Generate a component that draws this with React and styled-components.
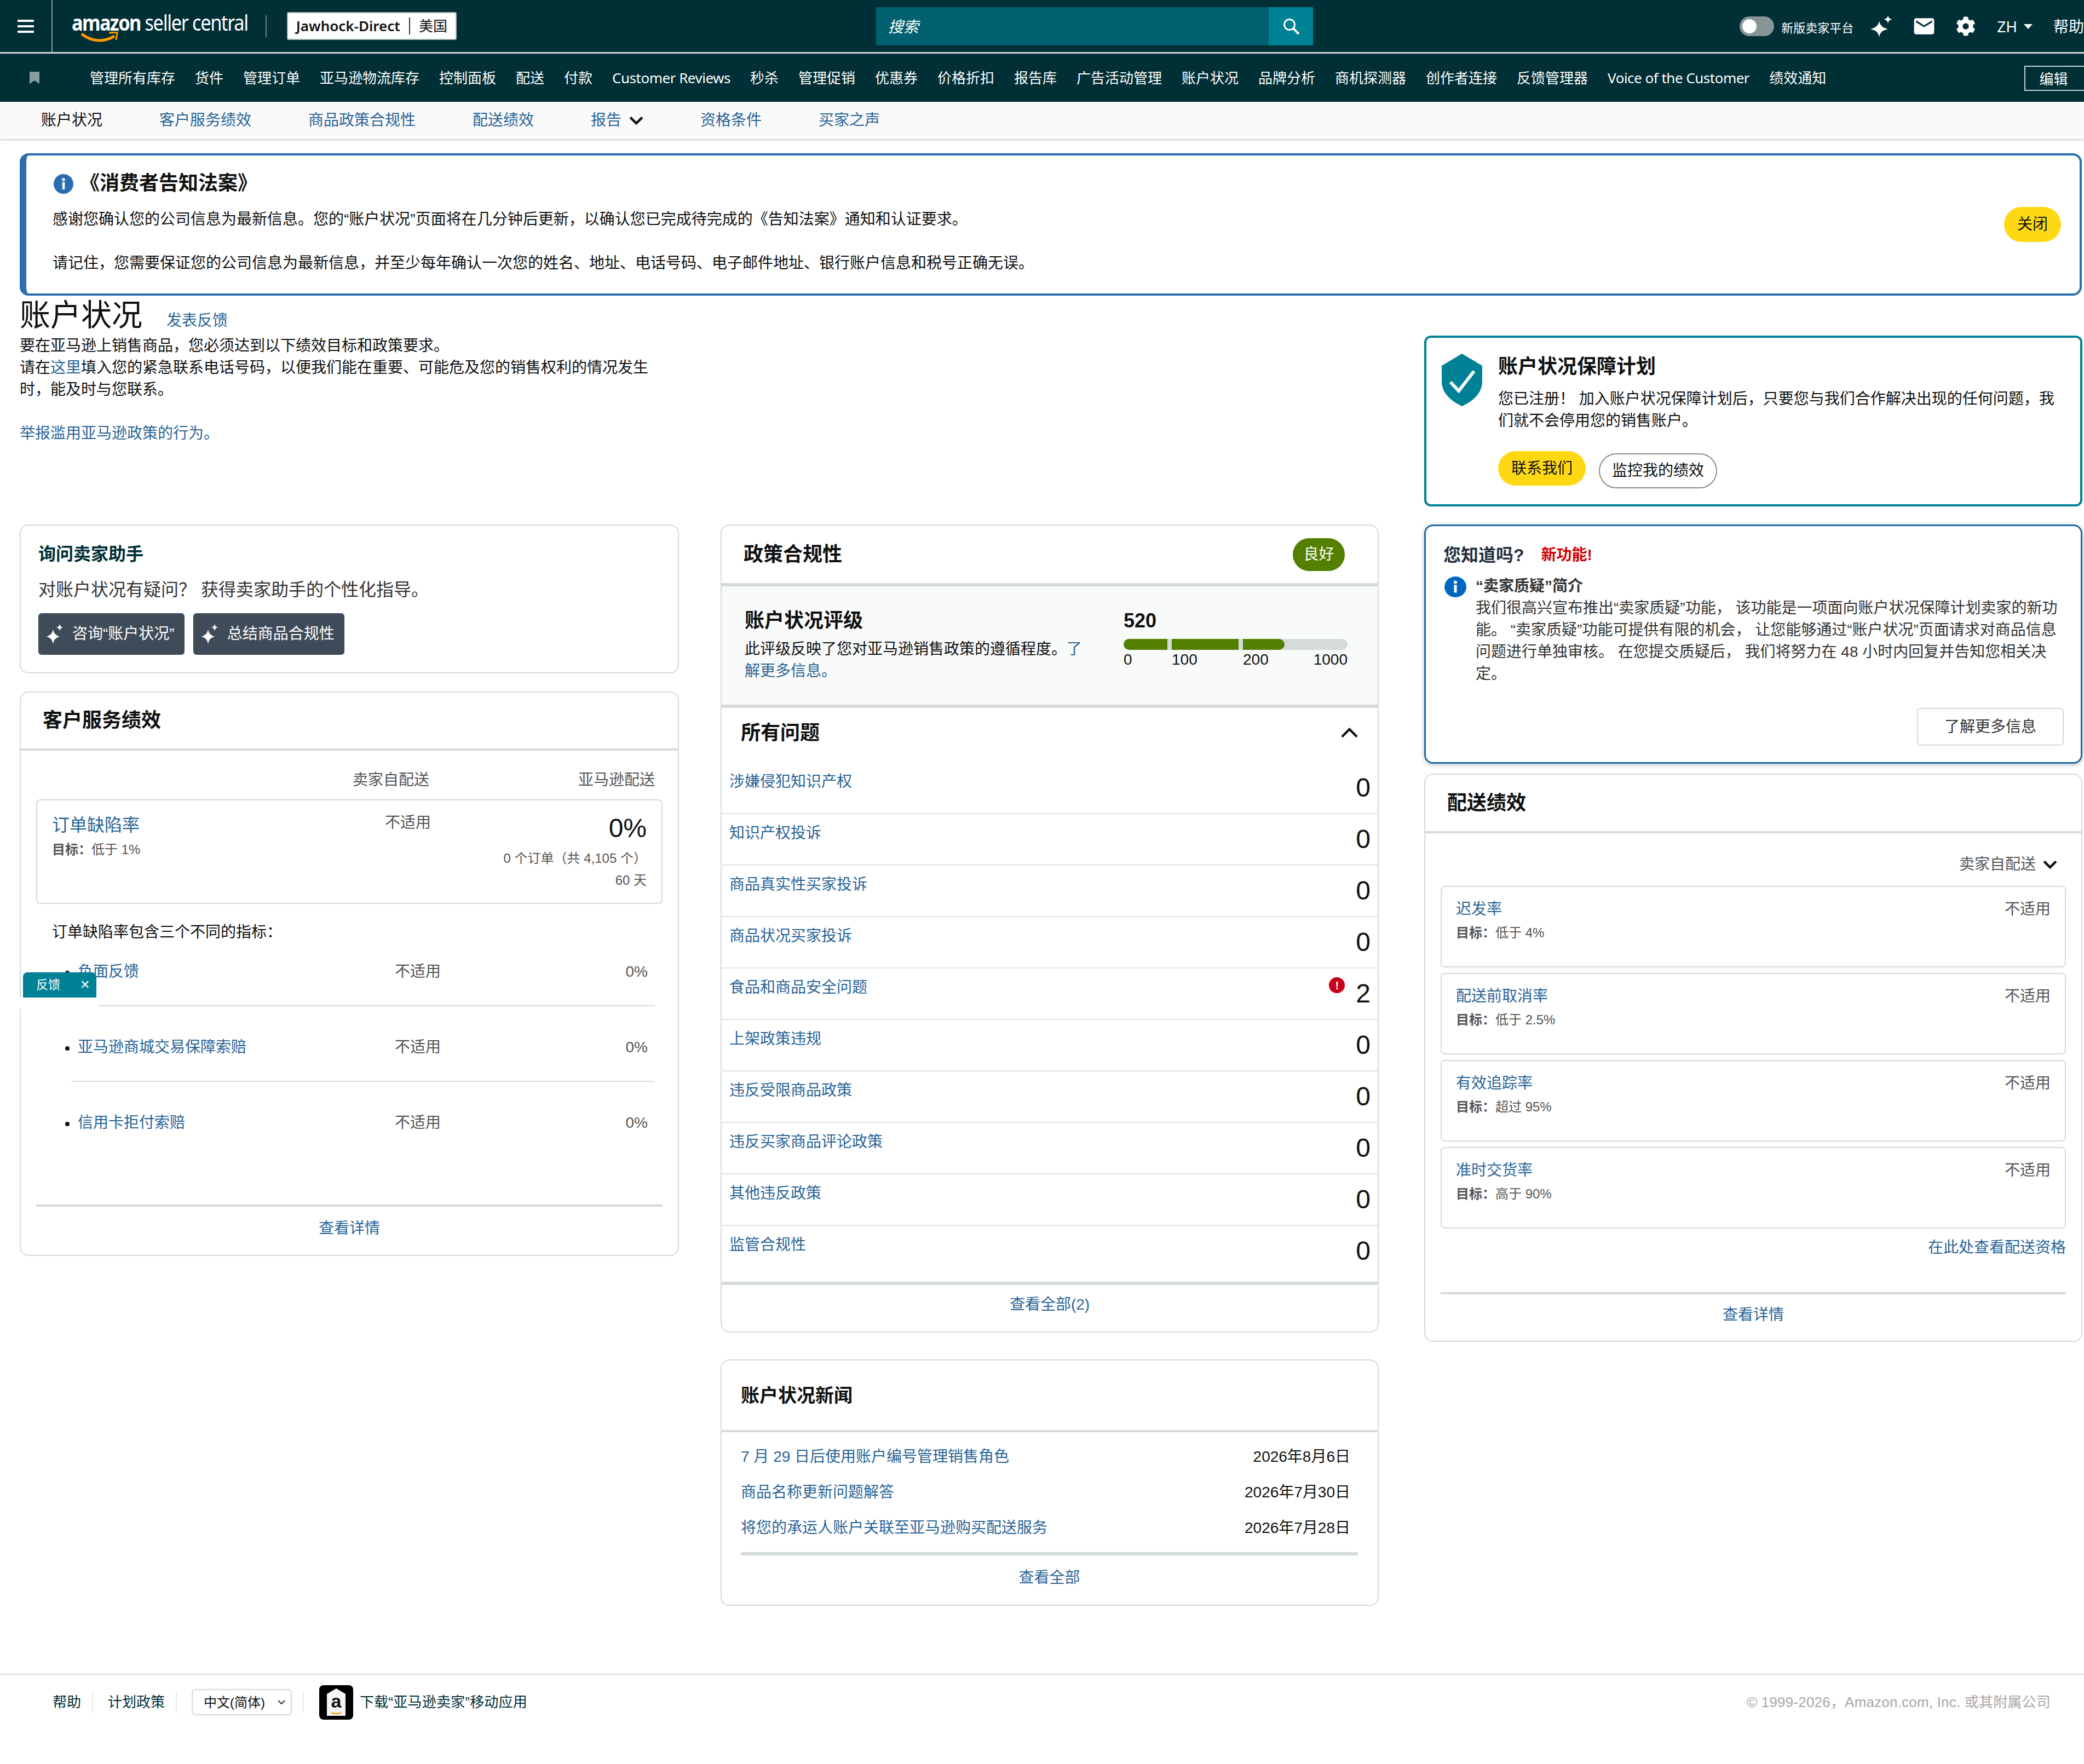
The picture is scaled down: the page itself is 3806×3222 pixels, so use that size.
import React from 'react';
import styled, { createGlobalStyle } from 'styled-components';
import { FaCog } from 'react-icons/fa';
import { MdEmail } from 'react-icons/md';

const link = '#2a6496';
const line = '#d5dbdb';
const sans = '"Liberation Sans","Noto Sans CJK SC",sans-serif';
const navFont = '"Noto Sans","Noto Sans CJK SC",sans-serif';

const Global = createGlobalStyle`
  html, body { margin: 0; padding: 0; background: #fff; }
  body { font-family: ${sans}; font-size: 28px; line-height: 40px; color: #0f1111; }
  * { box-sizing: border-box; }
`;

const Page = styled.div`position: relative; width: 3806px; min-height: 3222px; overflow: hidden; background: #fff;`;
const A = styled.a`color: ${link}; text-decoration: none;`;

/* top bar */
const TopBar = styled.header`display: flex; align-items: center; height: 98px; background: #002f36; border-bottom: 3px solid #ccd5d6; color: #fff; font-family: ${navFont};`;
const MenuCell = styled.div`display: flex; align-items: center; justify-content: center; width: 96px; height: 100%; border-right: 2px solid #8aa0a3;`;
const Burger = styled.span`display: block; width: 30px; height: 24px; border-top: 4px solid #fff; border-bottom: 4px solid #fff; position: relative;
  &::after { content: ''; position: absolute; left: 0; right: 0; top: 6px; height: 4px; background: #fff; }`;
const Logo = styled.div`position: relative; margin-left: 35px; width: 320px; height: 64px; white-space: nowrap;`;
const LogoWords = styled.div`font-size: 40px; line-height: 50px; letter-spacing: -1.6px; transform: scaleX(.86); transform-origin: left center;`;
const LogoBold = styled.b`font-weight: 700; letter-spacing: -1.9px;`;
const LogoLight = styled.span`font-weight: 400; margin-left: 9px;`;
const Smile = styled.svg`position: absolute; left: 16px; top: 42px; width: 70px; height: 24px;`;
const LogoDivider = styled.span`width: 2px; height: 40px; margin-left: 34px; background: #6d8488;`;
const Account = styled.div`display: flex; align-items: center; width: 310px; height: 51px; margin-left: 37px; padding: 0 15px; background: #fff; border: 2px solid #aab7b8; border-radius: 3px; color: #0f1111; font-size: 26px; white-space: nowrap;`;
const AccountName = styled.b`font-weight: 600; padding-right: 16px; border-right: 2px solid #333; line-height: 31px;`;
const AccountRegion = styled.span`padding-left: 16px; line-height: 31px;`;
const Search = styled.div`display: flex; width: 800px; height: 70px; margin-left: 766px; background: #00606e;`;
const SearchInput = styled.div`flex: 1; padding-left: 22px; line-height: 70px; font-size: 28px; font-style: italic; color: #fff;`;
const SearchButton = styled.div`display: flex; align-items: center; justify-content: center; width: 81px; background: #008296;`;
const Toggle = styled.span`position: relative; width: 63px; height: 36px; margin-left: 779px; border-radius: 18px; background: #879596;
  &::after { content: ''; position: absolute; left: 5px; top: 5px; width: 26px; height: 26px; border-radius: 50%; background: #fff; }`;
const ToggleLabel = styled.span`margin-left: 13px; font-size: 22px; padding-top: 4px; white-space: nowrap;`;
const IconSlot = styled.span`display: flex; align-items: center; margin-left: ${p => p.$ml}px; font-size: ${p => p.$size}px;`;
const Lang = styled.span`margin-left: 39px; font-size: 28px;`;
const Caret = styled.span`width: 0; height: 0; margin: 2px 0 0 12px; border-left: 8px solid transparent; border-right: 8px solid transparent; border-top: 9px solid #fff;`;
const Help = styled.span`margin-left: 38px; font-size: 28px; white-space: nowrap;`;

/* nav */
const NavBar = styled.nav`position: relative; display: flex; align-items: center; gap: 36px; height: 88px; padding-left: 54px; background: #002f36; color: #fff; font-family: ${navFont}; font-size: 26px; white-space: nowrap;`;
const NavMark = styled.svg`width: 18px; height: 22px; margin-right: 56px;`;
const NavItem = styled.span`letter-spacing: ${p => (p.$latin ? '-0.5px' : '0')};`;
const Edit = styled.span`position: absolute; right: -4px; top: 22px; width: 113px; height: 46px; border: 2px solid #c7d0d1; text-align: center; line-height: 44px; padding-right: 6px; font-size: 26px;`;

const SubNav = styled.div`display: flex; align-items: center; gap: 104px; height: 68px; padding-left: 75px; background: #fafafa; box-shadow: 0 2px 3px rgba(0,0,0,.2); font-size: 28px;`;
const SubItem = styled.a`display: flex; align-items: center; gap: 14px; color: ${p => (p.$active ? '#0f1111' : link)}; text-decoration: none;`;

/* alert */
const Alert = styled.section`display: flex; align-items: center; justify-content: space-between; width: 3766px; height: 260px; margin: 26px 0 0 36px; padding: 0 34px 0 48px; border: 4px solid #2a6eb0; border-left-width: 12px; border-radius: 16px;`;
const AlertBody = styled.div`margin-top: -4px;`;
const AlertTitleRow = styled.div`display: flex; align-items: center; gap: 12px; margin-bottom: 26px;`;
const AlertTitle = styled.b`font-size: 36px; line-height: 40px;`;
const Para = styled.p`margin: 0 0 ${p => p.$mb || 0}px;`;
const Pill = styled.span`display: inline-flex; align-items: center; justify-content: center; height: ${p => p.$h || 64}px; padding: 0 ${p => p.$px || 24}px; border-radius: 32px; background: #ffd814; color: #0f1111; white-space: nowrap;`;
const OutlinePill = styled(Pill)`height: 64px; margin-top: 4px; padding: 0 22px; background: #fff; border: 2px solid #888c8c;`;

/* intro */
const Intro = styled.section`display: flex; height: 418px; padding-left: 36px;`;
const IntroText = styled.div`width: 1170px; padding-top: 2px;`;
const TitleRow = styled.div`display: flex; align-items: baseline; gap: 44px;`;
const PageTitle = styled.h1`margin: 0; font-size: 56px; line-height: 68px; font-weight: 400;`;
const IntroCopy = styled.div`margin-top: 2px;`;
const Guarantee = styled.aside`align-self: flex-start; display: flex; gap: 29px; width: 1202px; height: 312px; margin: 73px 0 0 1395px; padding: 31px 20px 0 28px; border: 4px solid #008296; border-radius: 12px;`;
const Shield = styled.svg`flex: none; width: 74px; height: 96px; margin-top: -2px;`;
const GTitle = styled.h3`margin: 0; font-size: 36px; line-height: 44px; font-weight: 700;`;
const GText = styled.p`margin: 17px 0 35px;`;
const GButtons = styled.div`display: flex; align-items: flex-start; gap: 24px;`;

/* columns */
const Columns = styled.main`display: flex; align-items: flex-start; padding-left: 36px;`;
const Column = styled.div`display: flex; flex-direction: column; gap: ${p => p.$gap}px; width: ${p => p.$w}px; margin-left: ${p => p.$ml || 0}px;`;
const Card = styled.section`display: flex; flex-direction: column; border: 2px solid ${line}; border-radius: 16px; background: #fff;`;

const AskCard = styled(Card)`height: 272px; padding: 30px 32px 0;`;
const AskTitle = styled.h3`margin: 0; font-size: 32px; line-height: 44px; color: #002f36; font-weight: 700;`;
const AskText = styled.p`margin: 21px 0; font-size: 32px; line-height: 44px; color: #333;`;
const AskButtons = styled.div`display: flex; gap: 16px;`;
const AskButton = styled.span`display: flex; align-items: center; gap: 17px; height: 76px; padding: 0 18px 0 15px; background: #3f4b58; border-radius: 6px; color: #fff; white-space: nowrap;`;
const Spark = styled.svg`flex: none;`;

const CardHead = styled.header`display: flex; align-items: center; justify-content: space-between; height: ${p => p.$h}px; padding: 0 ${p => p.$pr || 0}px 0 ${p => p.$pl}px; border-bottom: ${p => p.$b || 4}px solid ${line};`;
const CardTitle = styled.h2`margin: 0; font-size: ${p => p.$size || 36}px; line-height: 44px; font-weight: 700;`;
const CsBody = styled.div`padding: 0 28px;`;
const ColHeads = styled.div`display: grid; grid-template-columns: 1fr 300px 412px; padding: 34px 14px 15px 0; color: #555; text-align: right;`;
const MetricBox = styled.div`display: grid; grid-template-columns: 1fr 300px 394px; height: 191px; padding: 0 27px; border: 2px solid ${line}; border-radius: 8px;`;
const MetricName = styled(A)`display: block; margin-top: 23px; font-size: 32px; line-height: 44px;`;
const Target = styled.div`margin-top: 5px; font-size: 24px; line-height: 36px; color: #555;`;
const NA = styled.div`margin-top: 21px; text-align: right; color: #555;`;
const BigValue = styled.div`margin-top: 23px; font-size: 48px; line-height: 56px; text-align: right;`;
const SmallValue = styled.div`margin-top: ${p => p.$mt}px; font-size: 24px; line-height: 36px; color: #555; text-align: right;`;
const Lead = styled.p`margin: 32px 0 0 57px;`;
const MetricRow = styled.div`position: relative; display: grid; grid-template-columns: 1fr 100px 378px; margin: 0 42px 0 92px; padding: ${p => (p.$first ? 32 : 55)}px 13px 41px 12px; border-bottom: ${p => (p.$last ? 0 : 2)}px solid ${line}; color: #555;
  &::before { content: ''; position: absolute; left: -11px; top: ${p => (p.$first ? 50 : 73)}px; width: 8px; height: 8px; border-radius: 50%; background: #111; }`;
const Right = styled.span`text-align: right;`;
const CardFoot = styled.div`margin: ${p => p.$m || '0'}; padding: ${p => p.$p}; border-top: ${p => p.$b || 4}px solid ${line}; text-align: center;`;

const Rating = styled.div`display: flex; height: 222px; padding: 41px 0 0 42px; background: #f9fafa; border-bottom: 6px solid ${line};`;
const RatingText = styled.div`width: 625px;`;
const RatingPara = styled.p`margin: 10px 0 0;`;
const Score = styled.div`width: 409px; margin-left: 67px;`;
const ScoreValue = styled.div`font-size: 36px; line-height: 44px; font-weight: 700;`;
const Bar = styled.div`display: flex; gap: 8px; height: 20px; margin-top: 11px; border-radius: 10px; overflow: hidden; background: ${line};`;
const BarFill = styled.span`display: block; height: 100%; background: #538000;`;
const ScaleRow = styled.div`display: flex; height: 36px; line-height: 36px; font-size: 28px;`;
const ScaleItem = styled.span`width: ${p => p.$w}px;`;
const ScaleEnd = styled.span`margin-left: auto;`;
const Chip = styled.span`display: flex; align-items: center; justify-content: center; width: 95px; height: 60px; border-radius: 30px; background: #538000; color: #fff;`;
const IssuesHead = styled.div`display: flex; align-items: center; justify-content: space-between; height: 100px; padding: 0 35px 8px;`;
const IssueRow = styled.div`display: flex; justify-content: space-between; height: ${p => (p.$last ? 102 : 94)}px; padding: 0 13px 0 14px; border-bottom: ${p => (p.$last ? 0 : 2)}px solid #dfe3e3;`;
const IssueLink = styled(A)`margin-top: 15px;`;
const IssueRight = styled.div`display: flex; align-items: flex-start;`;
const IssueValue = styled.span`margin-top: 18px; font-size: 48px; line-height: 56px;`;
const AlertDot = styled.span`display: flex; align-items: center; justify-content: center; width: 29px; height: 29px; margin: 16px 20px 0 0; border-radius: 50%; background: #c40018; color: #fff; font-size: 20px; line-height: 1; font-weight: 700;`;

const NewsList = styled.div`display: flex; flex-direction: column; gap: 25px; padding: 25px 50px 24px 35px;`;
const NewsRow = styled.div`display: flex; justify-content: space-between;`;
const NewsFoot = styled.div`margin: 0 36px 0 35px; padding: 21px 0 29px; border-top: 6px solid ${line}; text-align: center;`;

const Did = styled.section`height: 437px; padding: 31px 31px 0 32px; border: 3px solid #1f6aa8; border-radius: 16px; box-shadow: 0 2px 8px rgba(0,0,0,.25);`;
const DidHead = styled.div`display: flex; align-items: center; gap: 31px;`;
const DidTitle = styled.h3`margin: 0; font-size: 32px; line-height: 44px; font-weight: 700; color: #232f3e;`;
const NewTag = styled.b`color: #d00000;`;
const DidBody = styled.div`display: flex; gap: 17px; margin-top: 15px;`;
const Info = styled.svg`flex: none; margin: 2px 0 0 2px;`;
const DidText = styled.div`width: 1072px; color: #333;`;
const DidActions = styled.div`display: flex; justify-content: flex-end; margin-top: 42px;`;
const GhostButton = styled.span`display: flex; align-items: center; justify-content: center; width: 268px; height: 69px; border: 2px solid ${line}; border-radius: 6px; color: #333;`;

const DelBody = styled.div`display: flex; flex-direction: column; padding: 37px 28px 0;`;
const Dropdown = styled.div`display: flex; align-items: center; justify-content: flex-end; gap: 13px; padding-right: 16px; color: #555;`;
const DelBoxes = styled.div`display: flex; flex-direction: column; gap: 10px; margin-top: 19px;`;
const DelBox = styled.div`display: flex; justify-content: space-between; height: 149px; padding: 21px 26px 0; border: 2px solid ${line}; border-radius: 8px;`;
const DelNA = styled.span`color: #555;`;
const DelLink = styled(A)`align-self: flex-end; margin-top: 15px;`;
const DelFoot = styled.div`margin-top: 61px; padding: 18px 0 27px; border-top: 4px solid ${line}; text-align: center;`;

/* footer */
const Footer = styled.footer`display: flex; align-items: center; height: 102px; margin-top: 123px; padding: 0 61px 0 96px; border-top: 4px solid #e7e9e9; color: #002f36; font-size: 26px; white-space: nowrap;`;
const FootSep = styled.span`width: 2px; height: 40px; margin: 0 ${p => p.$r || 27}px 0 ${p => p.$l || 20}px; background: #e7e9e9;`;
const SelectWrap = styled.span`position: relative; display: flex;`;
const LangSelect = styled.select`appearance: none; width: 183px; height: 48px; padding: 0 30px 0 20px; border: 2px solid #d5d9d9; border-radius: 6px; background: #fff; font: 24px ${sans}; color: #0f1111;`;
const SelectArrow = styled.svg`position: absolute; right: 12px; top: 20px; width: 14px; height: 9px; pointer-events: none;`;
const AppIcon = styled.svg`width: 62px; height: 63px; margin-right: 12px;`;
const AppLabel = styled.span`letter-spacing: .2px;`;
const Copy = styled.span`margin-left: auto; letter-spacing: .2px; color: #a6a6a6;`;

const Chevron = ({ up, w = 24, sw = 3.5 }) => (
  <svg width={w} height={w * 0.6} viewBox="0 0 24 14" fill="none" stroke="#111" strokeWidth={sw}>
    <path d={up ? 'M2 12 12 2l10 10' : 'M2 2l10 10L22 2'} />
  </svg>
);
const Sparkle = ({ w = 30, h = 38, c = '#fff' }) => (
  <Spark width={w} height={h} viewBox="0 0 30 38" fill={c} preserveAspectRatio="none">
    <path d="M12 10c1 7 4 11 12 14-8 2-11 6-12 14-1-8-4-12-12-14 8-3 11-7 12-14z" />
    <path d="M24 0c.6 4 2 6 6 7-4 1-5.400 3-6 7-.6-4-2-6-6-7 4-1 5.400-3 6-7z" />
  </Spark>
);
const InfoIcon = ({ w, h, c }) => (
  <Info width={w} height={h} viewBox="0 0 40 40" preserveAspectRatio="none">
    <circle cx="20" cy="20" r="20" fill={c} />
    <circle cx="20" cy="11" r="3" fill="#fff" />
    <rect x="17.500" y="16" width="5" height="15" fill="#fff" />
  </Info>
);

const navItems = ['管理所有库存','货件','管理订单','亚马逊物流库存','控制面板','配送','付款','Customer Reviews','秒杀','管理促销','优惠券','价格折扣','报告库','广告活动管理','账户状况','品牌分析','商机探测器','创作者连接','反馈管理器','Voice of the Customer','绩效通知'];
const issues = [['涉嫌侵犯知识产权',0],['知识产权投诉',0],['商品真实性买家投诉',0],['商品状况买家投诉',0],['食品和商品安全问题',2],['上架政策违规',0],['违反受限商品政策',0],['违反买家商品评论政策',0],['其他违反政策',0],['监管合规性',0]];
const metrics = ['负面反馈','亚马逊商城交易保障索赔','信用卡拒付索赔'];
const delivery = [['迟发率','低于 4%'],['配送前取消率','低于 2.5%'],['有效追踪率','超过 95%'],['准时交货率','高于 90%']];
const news = [['7 月 29 日后使用账户编号管理销售角色','2026年8月6日'],['商品名称更新问题解答','2026年7月30日'],['将您的承运人账户关联至亚马逊购买配送服务','2026年7月28日']];

const FeedbackTab = styled.div`position: absolute; left: 42px; top: 1776px; display: flex; align-items: center; justify-content: space-between; width: 134px; height: 46px; padding: 0 12px 0 24px; background: #008296; border-radius: 8px 8px 0 0; color: #fff; font-size: 22px;
  &::after { content: ''; position: absolute; left: -8px; top: 46px; width: 146px; height: 20px; background: #fff; }`;

export default function App() {
  return (
    <Page>
      <Global />
      <TopBar>
        <MenuCell><Burger /></MenuCell>
        <Logo>
          <LogoWords><LogoBold>amazon</LogoBold><LogoLight>seller central</LogoLight></LogoWords>
          <Smile viewBox="0 0 70 24" fill="none">
            <path d="M2 4c18 14 40 16 60 4" stroke="#f90" strokeWidth="5" />
            <path d="M52 2l15-1-2 14" stroke="#f90" strokeWidth="3" />
          </Smile>
        </Logo>
        <LogoDivider />
        <Account><AccountName>Jawhock-Direct</AccountName><AccountRegion>美国</AccountRegion></Account>
        <Search>
          <SearchInput>搜索</SearchInput>
          <SearchButton>
            <svg width="32" height="32" viewBox="0 0 32 32" fill="none" stroke="#fff">
              <circle cx="13" cy="13" r="9.500" strokeWidth="3" />
              <path d="M20 20l10 10" strokeWidth="4" />
            </svg>
          </SearchButton>
        </Search>
        <Toggle />
        <ToggleLabel>新版卖家平台</ToggleLabel>
        <IconSlot $ml={31} $size={38}><Sparkle w={40} h={40} /></IconSlot>
        <IconSlot $ml={36} $size={44}><MdEmail /></IconSlot>
        <IconSlot $ml={36} $size={36}><FaCog /></IconSlot>
        <Lang>ZH</Lang>
        <Caret />
        <Help>帮助</Help>
      </TopBar>
      <NavBar>
        <NavMark viewBox="0 0 18 22" fill="#8a9ea1"><path d="M0 0h18v22l-9-6-9 6z" /></NavMark>
        {navItems.map(n => <NavItem key={n} $latin={/^[A-Z]/.test(n)}>{n}</NavItem>)}
        <Edit>编辑</Edit>
      </NavBar>
      <SubNav>
        <SubItem $active>账户状况</SubItem>
        <SubItem>客户服务绩效</SubItem>
        <SubItem>商品政策合规性</SubItem>
        <SubItem>配送绩效</SubItem>
        <SubItem>报告 <Chevron w={26} sw={4} /></SubItem>
        <SubItem>资格条件</SubItem>
        <SubItem>买家之声</SubItem>
      </SubNav>

      <Alert>
        <AlertBody>
          <AlertTitleRow>
            <InfoIcon w={36} h={36} c="#2a6eb0" />
            <AlertTitle>《消费者告知法案》</AlertTitle>
          </AlertTitleRow>
          <Para $mb={40}>感谢您确认您的公司信息为最新信息。您的“账户状况”页面将在几分钟后更新，以确认您已完成待完成的《告知法案》通知和认证要求。</Para>
          <Para>请记住，您需要保证您的公司信息为最新信息，并至少每年确认一次您的姓名、地址、电话号码、电子邮件地址、银行账户信息和税号正确无误。</Para>
        </AlertBody>
        <Pill>关闭</Pill>
      </Alert>

      <Intro>
        <IntroText>
          <TitleRow>
            <PageTitle>账户状况</PageTitle>
            <A>发表反馈</A>
          </TitleRow>
          <IntroCopy>
            <Para>要在亚马逊上销售商品，您必须达到以下绩效目标和政策要求。</Para>
            <Para $mb={40}>请在<A>这里</A>填入您的紧急联系电话号码，以便我们能在重要、可能危及您的销售权利的情况发生时，能及时与您联系。</Para>
            <A>举报滥用亚马逊政策的行为。</A>
          </IntroCopy>
        </IntroText>
        <Guarantee>
          <Shield viewBox="0 0 74 96">
            <path d="M37 0 74 22v28c0 22-16 36-37 46C16 86 0 72 0 50V22z" fill="#008296" />
            <path d="M16 52l15 16 28-36" fill="none" stroke="#fff" strokeWidth="6" />
          </Shield>
          <div>
            <GTitle>账户状况保障计划</GTitle>
            <GText>您已注册！ 加入账户状况保障计划后，只要您与我们合作解决出现的任何问题，我们就不会停用您的销售账户。</GText>
            <GButtons>
              <Pill $h={63} $px={24}>联系我们</Pill>
              <OutlinePill>监控我的绩效</OutlinePill>
            </GButtons>
          </div>
        </Guarantee>
      </Intro>

      <Columns>
        <Column $w={1204} $gap={33}>
          <AskCard>
            <AskTitle>询问卖家助手</AskTitle>
            <AskText>对账户状况有疑问？ 获得卖家助手的个性化指导。</AskText>
            <AskButtons>
              <AskButton><Sparkle />咨询“账户状况”</AskButton>
              <AskButton><Sparkle />总结商品合规性</AskButton>
            </AskButtons>
          </AskCard>
          <Card>
            <CardHead $h={106} $pl={40}><CardTitle>客户服务绩效</CardTitle></CardHead>
            <CsBody>
              <ColHeads><span /><span>卖家自配送</span><span>亚马逊配送</span></ColHeads>
              <MetricBox>
                <div>
                  <MetricName>订单缺陷率</MetricName>
                  <Target><b>目标：</b>低于 1%</Target>
                </div>
                <NA>不适用</NA>
                <div>
                  <BigValue>0%</BigValue>
                  <SmallValue $mt={9}>0 个订单（共 4,105 个）</SmallValue>
                  <SmallValue $mt={4}>60 天</SmallValue>
                </div>
              </MetricBox>
            </CsBody>
            <Lead>订单缺陷率包含三个不同的指标：</Lead>
            {metrics.map((m, i) => (
              <MetricRow key={m} $first={i === 0} $last={i === 2}>
                <A>{m}</A><Right>不适用</Right><Right>0%</Right>
              </MetricRow>
            ))}
            <CardFoot $m="88px 28px 0" $p="20px 0 28px"><A>查看详情</A></CardFoot>
          </Card>
        </Column>

        <Column $w={1202} $ml={76} $gap={49}>
          <Card>
            <CardHead $h={111} $pl={40} $pr={60} $b={6}>
              <CardTitle>政策合规性</CardTitle>
              <Chip>良好</Chip>
            </CardHead>
            <Rating>
              <RatingText>
                <CardTitle>账户状况评级</CardTitle>
                <RatingPara>此评级反映了您对亚马逊销售政策的遵循程度。<A>了解更多信息。</A></RatingPara>
              </RatingText>
              <Score>
                <ScoreValue>520</ScoreValue>
                <Bar>
                  <BarFill style={{ width: 80 }} />
                  <BarFill style={{ width: 122 }} />
                  <BarFill style={{ width: 76, borderRadius: '0 10px 10px 0' }} />
                </Bar>
                <ScaleRow>
                  <ScaleItem $w={88}>0</ScaleItem>
                  <ScaleItem $w={130}>100</ScaleItem>
                  <ScaleItem $w={120}>200</ScaleItem>
                  <ScaleEnd>1000</ScaleEnd>
                </ScaleRow>
              </Score>
            </Rating>
            <IssuesHead>
              <CardTitle>所有问题</CardTitle>
              <Chevron up w={33} sw={3} />
            </IssuesHead>
            {issues.map(([t, v], i) => (
              <IssueRow key={t} $last={i === issues.length - 1}>
                <IssueLink>{t}</IssueLink>
                <IssueRight>
                  {v > 0 && <AlertDot>!</AlertDot>}
                  <IssueValue>{v}</IssueValue>
                </IssueRight>
              </IssueRow>
            ))}
            <CardFoot $b={6} $p="16px 0 29px"><A>查看全部(2)</A></CardFoot>
          </Card>
          <Card>
            <CardHead $h={131} $pl={35}><CardTitle $size={34}>账户状况新闻</CardTitle></CardHead>
            <NewsList>
              {news.map(([t, d]) => <NewsRow key={t}><A>{t}</A><span>{d}</span></NewsRow>)}
            </NewsList>
            <NewsFoot><A>查看全部</A></NewsFoot>
          </Card>
        </Column>

        <Column $w={1202} $ml={83} $gap={18}>
          <Did>
            <DidHead><DidTitle>您知道吗?</DidTitle><NewTag>新功能!</NewTag></DidHead>
            <DidBody>
              <InfoIcon w={40} h={38} c="#0066c0" />
              <DidText>
                <b>“卖家质疑”简介</b><br />
                我们很高兴宣布推出“卖家质疑”功能， 该功能是一项面向账户状况保障计划卖家的新功能。 “卖家质疑”功能可提供有限的机会， 让您能够通过“账户状况”页面请求对商品信息问题进行单独审核。 在您提交质疑后， 我们将努力在 48 小时内回复并告知您相关决定。
              </DidText>
            </DidBody>
            <DidActions><GhostButton>了解更多信息</GhostButton></DidActions>
          </Did>
          <Card>
            <CardHead $h={107} $pl={40}><CardTitle>配送绩效</CardTitle></CardHead>
            <DelBody>
              <Dropdown>卖家自配送 <Chevron w={26} sw={4} /></Dropdown>
              <DelBoxes>
                {delivery.map(([n, t]) => (
                  <DelBox key={n}>
                    <div>
                      <A>{n}</A>
                      <Target><b>目标：</b>{t}</Target>
                    </div>
                    <DelNA>不适用</DelNA>
                  </DelBox>
                ))}
              </DelBoxes>
              <DelLink>在此处查看配送资格</DelLink>
              <DelFoot><A>查看详情</A></DelFoot>
            </DelBody>
          </Card>
        </Column>
      </Columns>

      <Footer>
        <span>帮助</span><FootSep />
        <span>计划政策</span><FootSep />
        <SelectWrap>
          <LangSelect defaultValue="zh"><option value="zh">中文(简体)</option></LangSelect>
          <SelectArrow viewBox="0 0 14 9" fill="none" stroke="#333" strokeWidth="2"><path d="M1 1l6 6 6-6" /></SelectArrow>
        </SelectWrap>
        <FootSep $r={28} />
        <AppIcon viewBox="0 0 62 63">
          <rect width="62" height="63" rx="8" fill="#000" />
          <path d="M14 16 31 6l17 10v40H14z" fill="#f5f5f5" />
          <text x="31" y="41" textAnchor="middle" fontSize="34" fontWeight="700" fontFamily="Liberation Sans" fill="#111">a</text>
          <path d="M22 50c6 3 12 3 18 0" stroke="#f90" strokeWidth="2" fill="none" />
        </AppIcon>
        <AppLabel>下载“亚马逊卖家”移动应用</AppLabel>
        <Copy>© 1999-2026，Amazon.com, Inc. 或其附属公司</Copy>
      </Footer>

      <FeedbackTab><span>反馈</span><span>✕</span></FeedbackTab>
    </Page>
  );
}
